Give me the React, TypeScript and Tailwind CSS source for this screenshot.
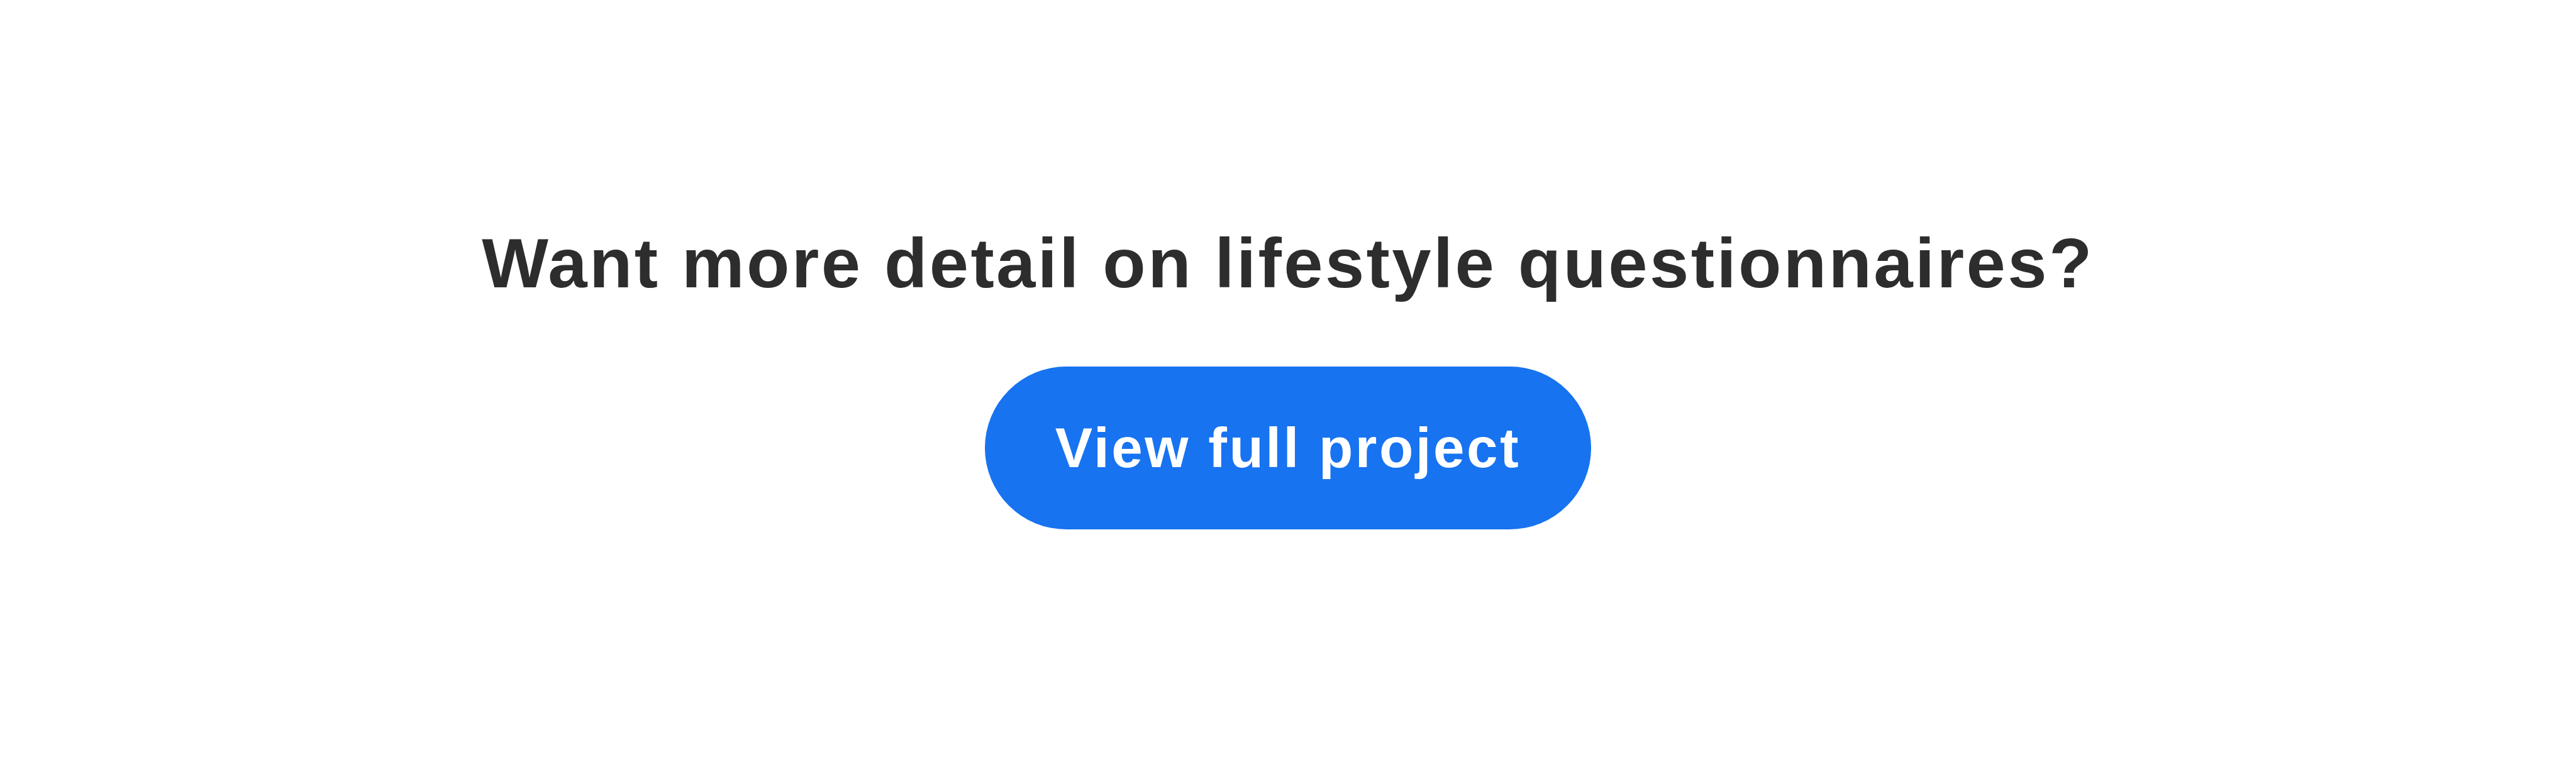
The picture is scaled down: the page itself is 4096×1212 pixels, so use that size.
export default function App() {
  return (
    <div className="w-full h-[1212px] bg-white flex flex-col items-center pt-[363px] font-['Liberation_Sans',Arial,sans-serif]">
      <h2 className="text-[112px] leading-none font-bold text-[#2d2d2d] tracking-[3.4px] whitespace-nowrap">
        Want more detail on lifestyle questionnaires?
      </h2>
      <button className="mt-[108px] h-[259px] w-[964px] rounded-full bg-[#1773f0] text-white text-[89px] leading-none font-bold tracking-[3.5px] flex items-center justify-center">
        View full project
      </button>
    </div>
  );
}
